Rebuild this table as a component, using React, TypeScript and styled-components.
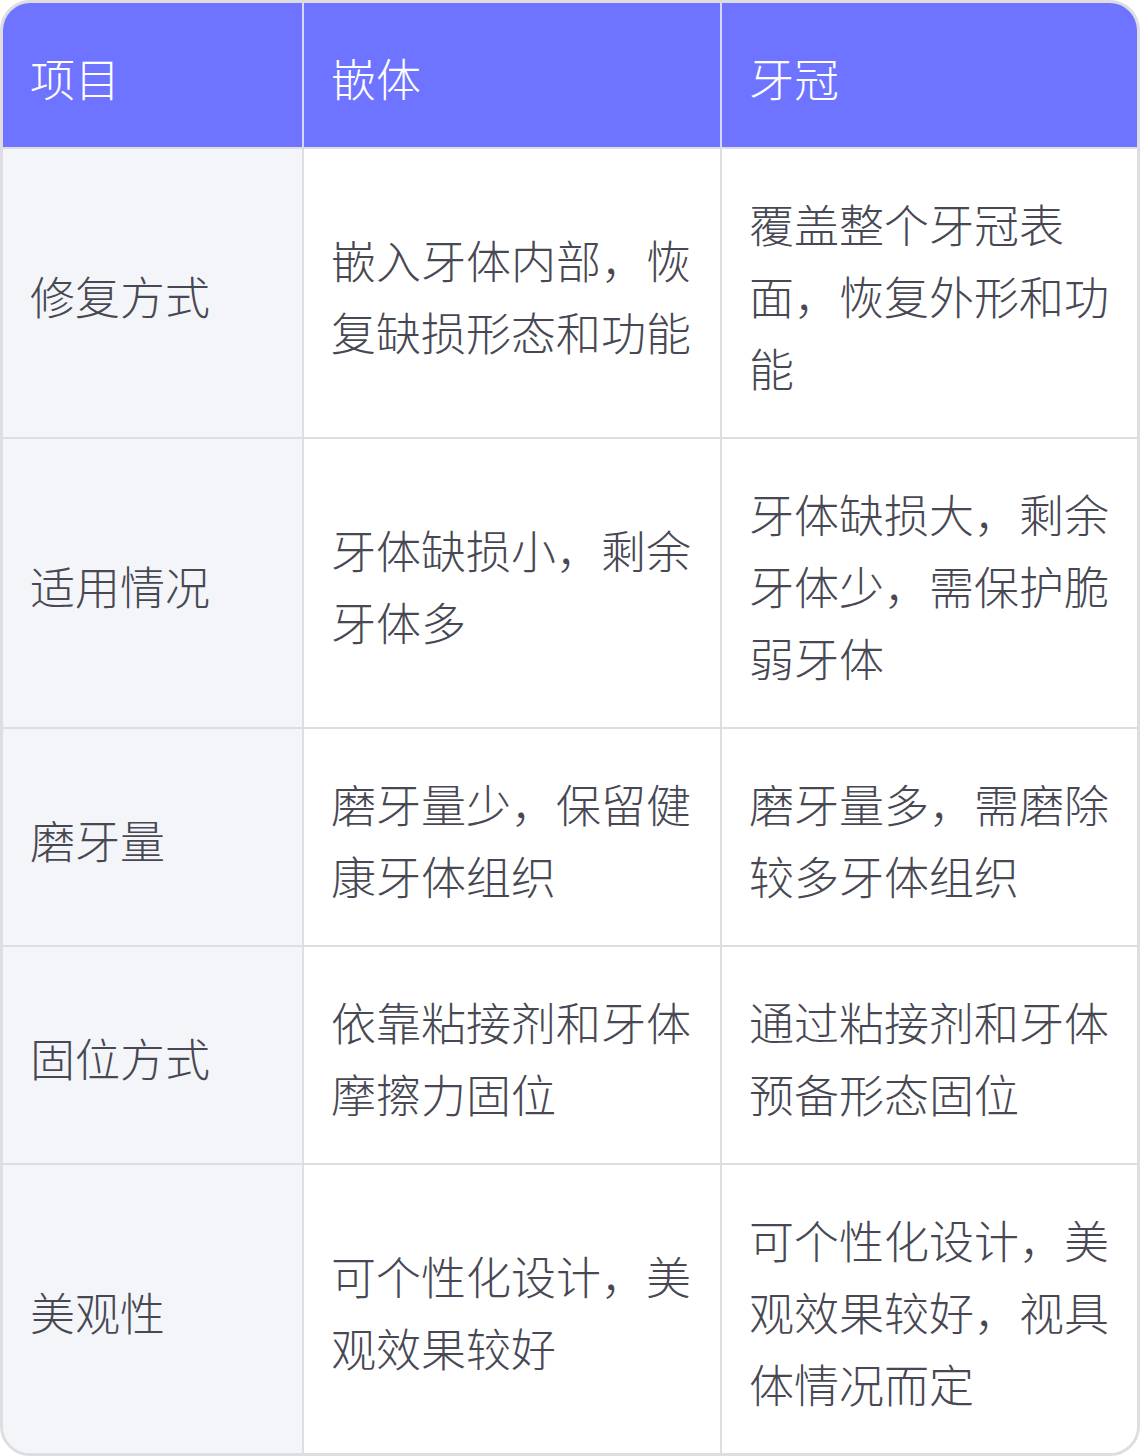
import React from "react";
import styled, { createGlobalStyle } from "styled-components";

const Global = createGlobalStyle`
  html, body { margin: 0; padding: 0; background: #ffffff; }
  body { font-family: "Noto Sans CJK SC", "Noto Sans", sans-serif; }
`;

const Frame = styled.div`
  width: 1140px;
  box-sizing: border-box;
  border: 3px solid #dddde2;
  border-radius: 30px;
  overflow: hidden;
  background: #ffffff;
`;

const Table = styled.table`
  width: 100%;
  border-collapse: separate;
  border-spacing: 0;
  table-layout: fixed;
`;

const HeadCell = styled.th<{ $last?: boolean }>`
  background: #6e74ff;
  color: #ffffff;
  font-weight: 300;
  font-size: 45px;
  line-height: 72px;
  text-align: left;
  padding: 39px 25px 33px 27px;
  border-right: ${(p) => (p.$last ? "none" : "2px solid #d6d8f5")};
  border-bottom: 2px solid #dddde2;
`;

const Cell = styled.td<{ $label?: boolean; $last?: boolean; $bottom?: boolean }>`
  background: ${(p) => (p.$label ? "#f4f5f9" : "#ffffff")};
  color: #474853;
  font-weight: 300;
  font-size: 45px;
  line-height: 72px;
  padding: 39px 25px 33px 27px;
  vertical-align: middle;
  word-break: break-all;
  border-right: ${(p) => (p.$last ? "none" : "2px solid #dddde2")};
  border-bottom: ${(p) => (p.$bottom ? "none" : "2px solid #dddde2")};
`;

const rows: [string, string, string][] = [
  ["修复方式", "嵌入牙体内部，恢复缺损形态和功能", "覆盖整个牙冠表面，恢复外形和功能"],
  ["适用情况", "牙体缺损小，剩余牙体多", "牙体缺损大，剩余牙体少，需保护脆弱牙体"],
  ["磨牙量", "磨牙量少，保留健康牙体组织", "磨牙量多，需磨除较多牙体组织"],
  ["固位方式", "依靠粘接剂和牙体摩擦力固位", "通过粘接剂和牙体预备形态固位"],
  ["美观性", "可个性化设计，美观效果较好", "可个性化设计，美观效果较好，视具体情况而定"],
];

export default function App() {
  return (
    <>
      <Global />
      <Frame>
        <Table>
          <colgroup>
            <col style={{ width: 301 }} />
            <col style={{ width: 418 }} />
            <col style={{ width: 415 }} />
          </colgroup>
          <thead>
            <tr>
              <HeadCell>项目</HeadCell>
              <HeadCell>嵌体</HeadCell>
              <HeadCell $last>牙冠</HeadCell>
            </tr>
          </thead>
          <tbody>
            {rows.map((r, i) => (
              <tr key={r[0]}>
                <Cell $label $bottom={i === rows.length - 1}>{r[0]}</Cell>
                <Cell $bottom={i === rows.length - 1}>{r[1]}</Cell>
                <Cell $last $bottom={i === rows.length - 1}>{r[2]}</Cell>
              </tr>
            ))}
          </tbody>
        </Table>
      </Frame>
    </>
  );
}
